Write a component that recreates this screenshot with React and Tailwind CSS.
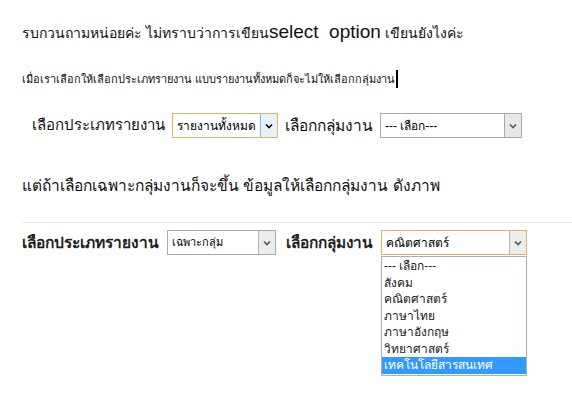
import React from "react";

function Chevron({ className }) {
  return (
    <svg viewBox="0 0 8 6" className={className} fill="none" stroke="currentColor" strokeWidth="1.6">
      <path d="M1 1.5 L4 4.5 L7 1.5" />
    </svg>
  );
}

function FakeSelect({ value, width, focus, textClass, arrowClass }) {
  return (
    <div
      className={
        "flex items-stretch h-[25px] bg-white border " +
        (focus ? "border-[#e0b45c] " : "border-[#a9a9a9] ") +
        width
      }
    >
      <div className={"flex-1 flex items-center pl-1 text-black " + textClass}>{value}</div>
      <div className={"w-[17px] flex items-center justify-center border-l " + arrowClass}>
        <Chevron className="w-[8px] h-[6px]" />
      </div>
    </div>
  );
}

const options = ["--- เลือก---", "สังคม", "คณิตศาสตร์", "ภาษาไทย", "ภาษาอังกฤษ", "วิทยาศาสตร์", "เทคโนโลยีสารสนเทศ"];

export default function App() {
  return (
    <div className="w-[572px] h-[396px] bg-white overflow-hidden text-[#111] font-['Tahoma','Liberation_Sans','Noto_Sans',sans-serif]">
      <div className="pl-[22px] pt-[21px] h-[22px] box-content flex items-baseline text-[14px] leading-[22px]">
        <span>รบกวนถามหน่อยค่ะ ไม่ทราบว่าการเขียน</span>
        <span className="text-[19px] font-['Liberation_Sans',sans-serif]">select&nbsp; option</span>
        <span>&nbsp;เขียนยังไงค่ะ</span>
      </div>

      <div className="pl-[22px] mt-[27px] flex items-center text-[11px] leading-[18px]">
        <span>เมื่อเราเลือกให้เลือกประเภทรายงาน แบบรายงานทั้งหมดก็จะไม่ให้เลือกกลุ่มงาน</span>
        <span className="inline-block w-[2px] h-[18px] bg-black ml-[1px]"></span>
      </div>

      <div className="pl-[32px] mt-[25px] flex items-center gap-[6px] text-[15px]">
        <span className="mr-[1px]">เลือกประเภทรายงาน</span>
        <FakeSelect
          value="รายงานทั้งหมด"
          width="w-[106px]"
          focus
          textClass="text-[12px]"
          arrowClass="bg-[#e5f1fb] border-[#7eb4ea] text-black"
        />
        <span className="ml-[1px] mr-[1px] text-[15.5px]">เลือกกลุ่มงาน</span>
        <FakeSelect
          value="--- เลือก---"
          width="w-[142px]"
          textClass="text-[12px]"
          arrowClass="bg-[#e8e8e8] border-[#a9a9a9] text-[#555]"
        />
      </div>

      <div className="pl-[22px] mt-[37px] text-[15.5px] leading-[22px]">
        แต่ถ้าเลือกเฉพาะกลุ่มงานก็จะขึ้น ข้อมูลให้เลือกกลุ่มงาน ดังภาพ
      </div>

      <div className="ml-[22px] mt-[25px] border-t border-[#ececec]"></div>

      <div className="pl-[22px] mt-[7px] flex items-start gap-[8px]">
        <div className="h-[26px] flex items-center text-[15.5px] font-semibold text-[#222]">เลือกประเภทรายงาน</div>
        <FakeSelect
          value="เฉพาะกลุ่ม"
          width="w-[109px]"
          textClass="text-[11px]"
          arrowClass="bg-[#ececec] border-[#b5b5b5] text-[#555]"
        />
        <div className="h-[26px] flex items-center text-[15.3px] font-semibold text-[#222] ml-[2px] mr-[1px]">เลือกกลุ่มงาน</div>
        <div className="flex flex-col w-[146px]">
          <FakeSelect
            value="คณิตศาสตร์"
            width="w-[146px]"
            focus
            textClass="text-[12px]"
            arrowClass="bg-[#ececec] border-[#b5b5b5] text-[#555]"
          />
          <div className="border border-[#9fb3c8] bg-white mt-[1px] py-[1px]">
            {options.map((o, i) => (
              <div
                key={o}
                className={
                  "h-[16.5px] leading-[16.5px] pl-[2px] text-[12px] " +
                  (i === options.length - 1 ? "bg-[#3399ff] text-white" : "text-[#222]")
                }
              >
                {o}
              </div>
            ))}
          </div>
        </div>
      </div>
    </div>
  );
}
